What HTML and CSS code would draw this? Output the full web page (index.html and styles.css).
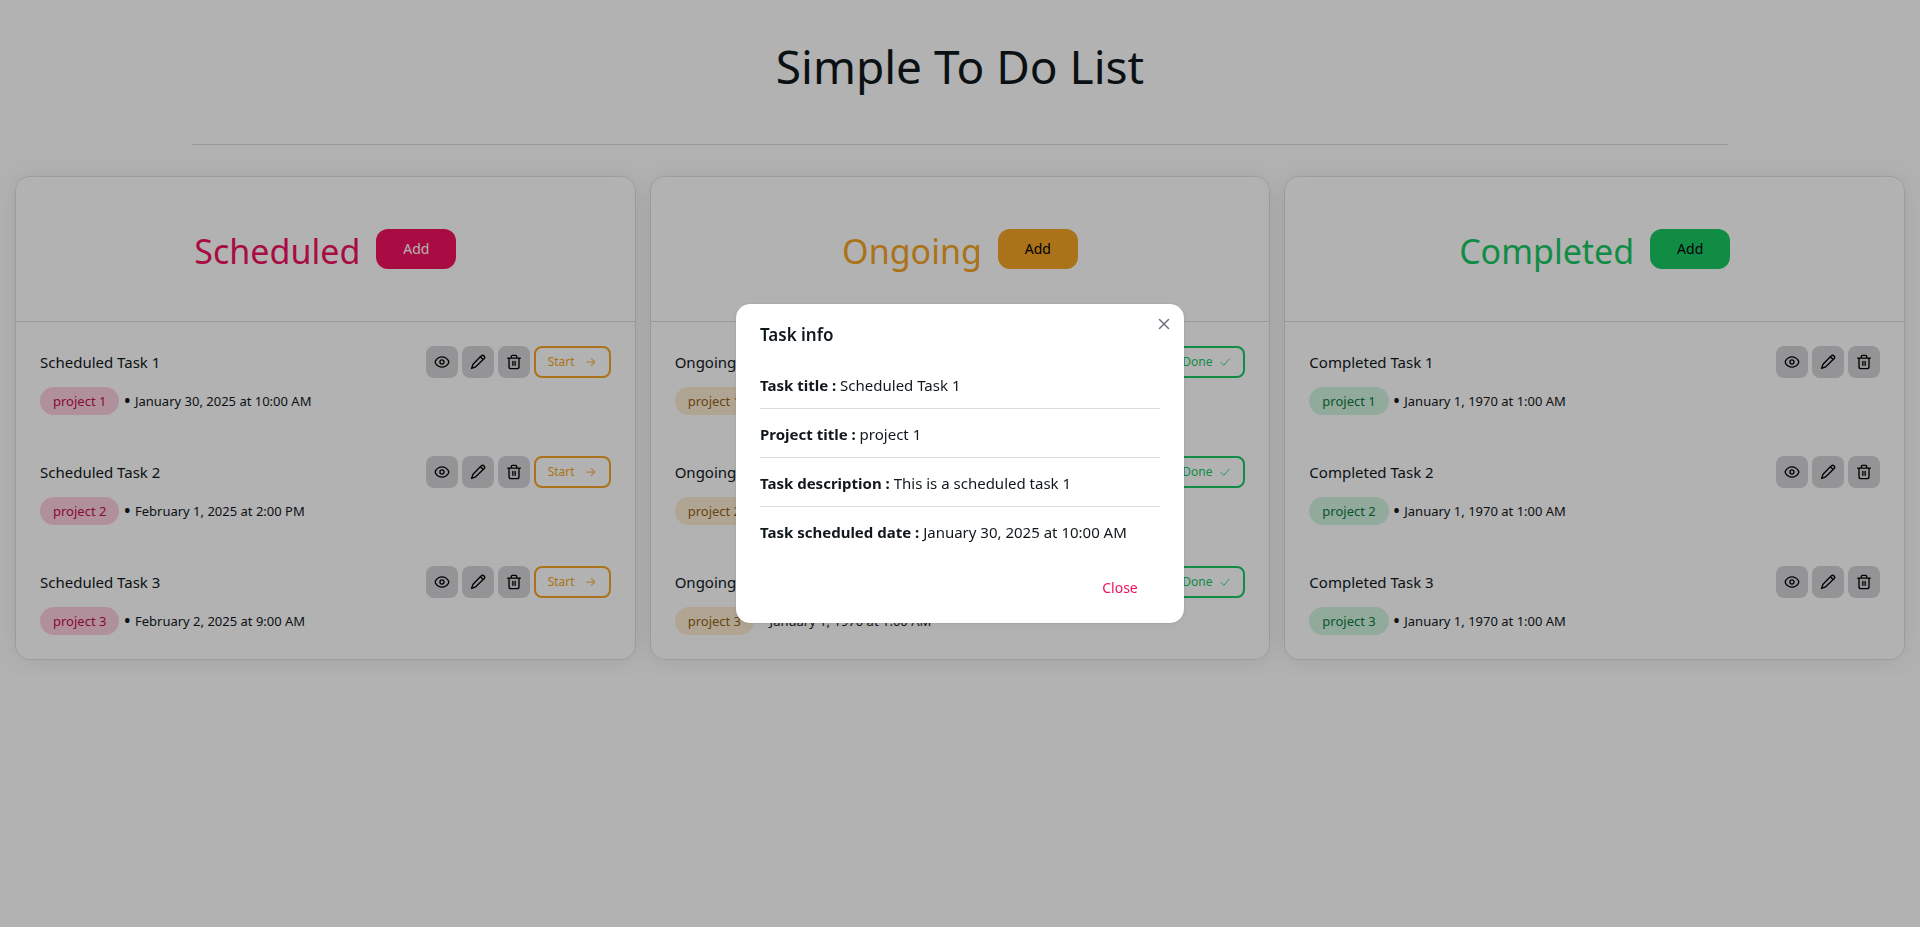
FILE: index.html
```html
<!DOCTYPE html>
<html lang="en">
<head>
<meta charset="utf-8">
<title>Simple To Do List</title>
<link rel="stylesheet" href="styles.css">
</head>
<body>
<svg class="sprite" aria-hidden="true">
  <symbol id="eye" viewBox="0 0 24 24"><path d="M15.100 12a3.100 3.100 0 1 1-6.200 0 3.100 3.100 0 0 1 6.200 0Z"/><path d="M12 19.800c3.700 0 7-2 9.300-5.300.9-1.400.9-3.600 0-5C19 6.200 15.700 4.200 12 4.200S5 6.200 2.700 9.500c-.9 1.400-.9 3.600 0 5 2.300 3.300 5.600 5.300 9.300 5.300Z"/></symbol>
  <symbol id="pen" viewBox="0 0 24 24"><path d="M15.500 4.200 4.600 15.500 2.300 21.700l6.200-2.500L19.800 8.300M15.500 4.200l1.300-1.300a3 3 0 0 1 4.300 4.300l-1.300 1.100M15.500 4.200l4.300 4.100"/></symbol>
  <symbol id="trash" viewBox="0 0 24 24"><path d="M2.500 6.200h19M8 6V3.500C8 2.500 8.500 2 9.500 2h5c1 0 1.500.5 1.500 1.500V6M4.500 6.500V19c0 2 1 3 3 3h9c2 0 3-1 3-3V6.500M10.300 11v6M13.700 11v6"/></symbol>
  <symbol id="arrow" viewBox="0 0 24 24"><path d="M2 12h19M13 4l8 8-8 8"/></symbol>
  <symbol id="check" viewBox="0 0 24 24"><path d="m2 13 7 7L22 5"/></symbol>
</svg>

<div class="page">
  <h1 class="title">Simple To Do List</h1>
  <hr class="rule">
  <main class="board" id="board"></main>
</div>

<div class="overlay">
  <section class="modal" role="dialog" aria-modal="true" aria-labelledby="modal-title">
    <button class="dismiss" type="button" aria-label="Dismiss"><svg viewBox="0 0 12 12"><path d="m1.500 1.500 9 9M10.500 1.500l-9 9"/></svg></button>
    <h2 class="modal-title" id="modal-title">Task info</h2>
    <div class="modal-body">
      <p><strong>Task title :</strong> Scheduled Task 1</p>
      <p><strong>Project title :</strong> project 1</p>
      <p><strong>Task description :</strong> This is a scheduled task 1</p>
      <p><strong>Task scheduled date :</strong> January 30, 2025 at 10:00 AM</p>
    </div>
    <div class="modal-foot"><button class="close" type="button">Close</button></div>
  </section>
</div>
<script src="app.js"></script>
</body>
</html>
```
FILE: styles.css
```css
* { box-sizing: border-box; }

body {
  margin: 0;
  background: #fff;
  color: #11181c;
  font: 15px/24px "Noto Sans", "Open Sans", sans-serif;
}

h1, h2, p, ul { margin: 0; padding: 0; font-weight: 400; }
button { border: 0; padding: 0; font: inherit; color: inherit; background: none; cursor: pointer; }
svg { fill: none; stroke: currentColor; stroke-width: 2; stroke-linecap: round; stroke-linejoin: round; }
.sprite { display: none; }

.title { padding-top: 42px; font-size: 46px; line-height: 48px; text-align: center; }
.rule { width: 80%; height: 1px; margin: 54px auto 32px; border: 0; background: rgba(17, 17, 17, .15); }

.board {
  display: grid;
  grid-template-columns: repeat(3, minmax(0, 1fr));
  gap: 16px;
  padding: 0 16px 16px;
}

.card {
  border-radius: 14px;
  background: #fff;
  box-shadow: 0 0 15px rgba(0, 0, 0, .03), 0 2px 30px rgba(0, 0, 0, .08), 0 0 0 1px rgba(0, 0, 0, .08);
}
.card-head {
  display: flex;
  align-items: center;
  justify-content: center;
  gap: 16px;
  padding: 50px 24px;
  border-bottom: 1px solid rgba(17, 17, 17, .15);
}
.card-title { padding-top: 4px; font-size: 34px; line-height: 40px; color: var(--tone); }
.add { width: 80px; height: 40px; border-radius: 12px; background: var(--tone); color: var(--on-tone); font-size: 14px; }

.scheduled { --tone: #f31260; --on-tone: #fff; --tint: #fdd0df; --ink: #c20e4d; }
.ongoing { --tone: #f5a524; --on-tone: #000; --tint: #fdedd3; --ink: #936316; }
.completed { --tone: #17c964; --on-tone: #000; --tint: #d1f4e0; --ink: #0e793c; }

.tasks { display: flex; flex-direction: column; gap: 41px; padding: 24px; list-style: none; }
.task { display: flex; flex-direction: column; gap: 9px; }
.task-top { display: flex; align-items: center; justify-content: space-between; }
.actions { display: flex; gap: 4px; }
.icon-button {
  display: grid;
  place-items: center;
  width: 32px;
  height: 32px;
  border-radius: 8px;
  background: #d4d4d8;
  color: #000;
}
.icon-button svg { width: 16px; height: 16px; }
.move {
  display: flex;
  align-items: center;
  justify-content: space-between;
  width: 77px;
  height: 32px;
  padding: 0 13px 0 12px;
  border: 2px solid;
  border-radius: 8px;
  font-size: 12px;
}
.move svg { width: 10px; height: 10px; }
.to-ongoing { color: #f5a524; }
.to-ongoing svg { stroke-width: 3; opacity: .7; }
.to-done { color: #17c964; }

.meta { display: flex; align-items: center; gap: 4px; font-size: 13px; }
.chip { height: 28px; padding: 0 13px; border-radius: 14px; background: var(--tint); color: var(--ink); line-height: 28px; }
.bullet { font-size: 20px; }

.overlay {
  position: fixed;
  inset: 0;
  display: flex;
  align-items: center;
  justify-content: center;
  background: rgba(0, 0, 0, .3);
}
.modal {
  position: relative;
  width: 100%;
  max-width: 448px;
  border-radius: 14px;
  background: #fff;
  box-shadow: 0 0 5px rgba(0, 0, 0, .02), 0 2px 10px rgba(0, 0, 0, .06), 0 0 1px rgba(0, 0, 0, .3);
}
.dismiss { position: absolute; top: 4px; right: 4px; display: grid; place-items: center; width: 32px; height: 32px; color: #71717a; }
.dismiss svg { width: 12px; height: 12px; stroke-width: 1.5; }
.modal-title { padding: 17px 24px 15px; font-size: 17px; line-height: 28px; font-weight: 600; }
.modal-body { padding: 8px 24px; }
.modal-body p + p { margin-top: 11px; padding-top: 13px; border-top: 1px solid rgba(17, 17, 17, .15); }
.modal-body p:first-child { padding-top: 1px; }
.modal-foot { display: flex; justify-content: flex-end; padding: 16px 24px; }
.close { width: 80px; height: 39px; padding-top: 1px; color: #f31260; font-size: 14px; }
```
FILE: app.js
```js
const columns = [
  { name: 'Scheduled', dates: ['January 30, 2025 at 10:00 AM', 'February 1, 2025 at 2:00 PM', 'February 2, 2025 at 9:00 AM'], move: ['Start', 'arrow', 'to-ongoing'] },
  { name: 'Ongoing', dates: Array(3).fill('January 1, 1970 at 1:00 AM'), move: ['Done', 'check', 'to-done'] },
  { name: 'Completed', dates: Array(3).fill('January 1, 1970 at 1:00 AM') }
];

const icon = (id) => `<svg aria-hidden="true"><use href="#${id}"/></svg>`;
const iconButton = (label, id) => `<button class="icon-button" type="button" aria-label="${label}">${icon(id)}</button>`;

const task = (column, date, i) => `
  <li class="task">
    <div class="task-top">
      <span>${column.name} Task ${i + 1}</span>
      <div class="actions">
        ${iconButton('View', 'eye')}${iconButton('Edit', 'pen')}${iconButton('Delete', 'trash')}
        ${column.move ? `<button class="move ${column.move[2]}" type="button">${column.move[0]}${icon(column.move[1])}</button>` : ''}
      </div>
    </div>
    <div class="meta"><span class="chip">project ${i + 1}</span><span class="bullet">•</span><span>${date}</span></div>
  </li>`;

document.getElementById('board').innerHTML = columns.map((column) => `
  <section class="card ${column.name.toLowerCase()}">
    <header class="card-head">
      <h2 class="card-title">${column.name}</h2>
      <button class="add" type="button">Add</button>
    </header>
    <ul class="tasks">${column.dates.map((date, i) => task(column, date, i)).join('')}</ul>
  </section>`).join('');
```
